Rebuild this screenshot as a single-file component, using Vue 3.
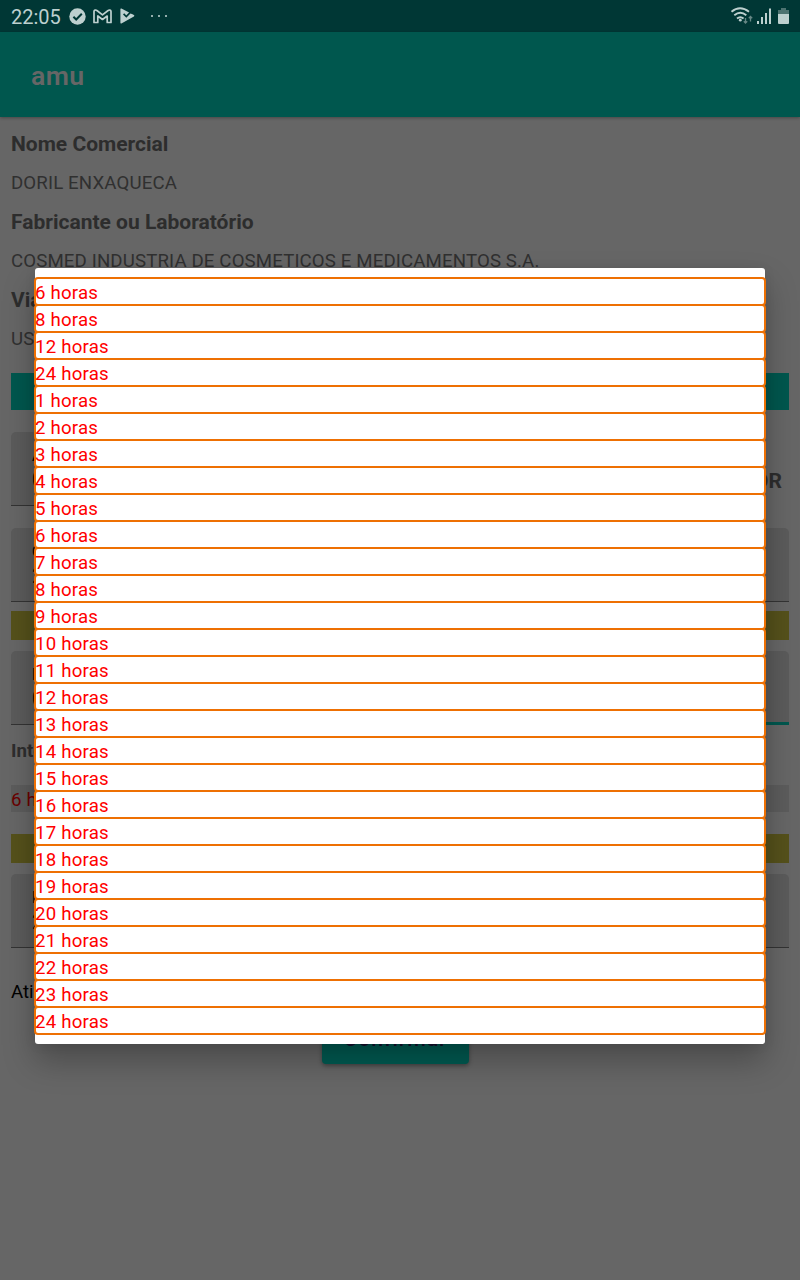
<script setup>
const first = [6, 8, 12, 24]
const hours = [...first, ...Array.from({ length: 24 }, (_, i) => i + 1)]
</script>

<template>
  <div class="screen">
    <header class="status">
      <span class="clock">22:05</span>
      <svg class="ic check" width="17" height="17" viewBox="0 0 17 17">
        <circle cx="8.5" cy="8.5" r="8.2" fill="#bdd0cf" />
        <path d="M4.4 8.7l2.8 2.8 5.6-5.8" fill="none" stroke="#003735" stroke-width="2" />
      </svg>
      <svg class="ic mail" width="19" height="15" viewBox="0 0 19 15">
        <path d="M1 13.5V2.6C1 .9 2.8.6 3.9 1.5L9.5 5.8l5.6-4.3c1.1-.9 2.9-.6 2.9 1.1v10.9h-3.8V7L9.5 10.5 4.8 7v6.5z" fill="none" stroke="#bdd0cf" stroke-width="1.7" stroke-linejoin="round" />
      </svg>
      <svg class="ic play" width="15" height="16" viewBox="0 0 15 16">
        <path d="M.4 1.2Q.4.2 1.4.6L13.9 7q1 .7 0 1.4L1.4 15.4q-1 .4-1-.6z" fill="#bdd0cf" />
        <path d="M3.6 5.9l2.7 2.6 5-5.2" fill="none" stroke="#003735" stroke-width="1.7" />
        <path d="M9.5 4.3l2.2-2.2 2 2-2.6 1.6z" fill="#003735" />
      </svg>
      <span class="dots"><i></i><i></i><i></i></span>
      <span class="spacer"></span>
      <svg class="sys" width="60" height="20" viewBox="0 0 60 20">
        <g fill="none" stroke="#bdd0cf" stroke-width="1.9">
          <path d="M1.5 5.7q8.5-7 17.5 0" />
          <path d="M4.3 9.3q6-5 12 0" />
          <path d="M7 12.5q3.3-2.7 6.6 0" />
        </g>
        <circle cx="10.3" cy="14.2" r="1.4" fill="#bdd0cf" />
        <path d="M15.5 12v5M13.8 15.3l1.7 1.8 1.7-1.8M20.5 15.5v-5M18.8 12.2l1.7-1.8 1.7 1.8" fill="none" stroke="#668785" stroke-width="1.3" />
        <path d="M27 15h2v3h-2zM31 11h2v7h-2zM35 7h2v11h-2zM39 2.5h2V18h-2z" fill="#bdd0cf" />
        <path d="M51 2h5v2h3v4H48V4h3z" fill="#4d7371" />
        <path d="M48 8h11v9q0 1-1 1h-9q-1 0-1-1z" fill="#bdd0cf" />
      </svg>
    </header>
    <div class="appbar">amu</div>

    <main class="content">
      <h2>Nome Comercial</h2>
      <p>DORIL ENXAQUECA</p>
      <h2>Fabricante ou Laboratório</h2>
      <p>COSMED INDUSTRIA DE COSMETICOS E MEDICAMENTOS S.A.</p>
      <h2>Via</h2>
      <p>USO</p>
      <div class="teal-bar"></div>
      <div class="row">
        <div class="field short"><small>A</small><b>0</b></div>
        <strong class="unit">OR</strong>
      </div>
      <div class="field second"><small>Q</small><b>2</b></div>
      <div class="olive"></div>
      <div class="field third"><small>D</small><b>0</b><span class="focus"></span></div>
      <h3>Intervalo</h3>
      <div class="spinner">6 horas</div>
      <div class="olive lower"></div>
      <div class="field fourth"><small>H</small><b>2</b></div>
      <div class="active">Ativo</div>
      <div class="button">Confirmar</div>
    </main>

    <div class="dialog">
      <div v-for="(h, i) in hours" :key="i" class="item">{{ h }} horas</div>
    </div>
  </div>
</template>

<style>
body { background: #666; overflow: hidden; }
</style>

<style scoped>
* { box-sizing: border-box; }
.screen { position: relative; width: 800px; height: 1280px; overflow: hidden; background: #666; font-family: Roboto, sans-serif; font-size: 18.67px; color: #2d2d2d; }
.status { display: flex; align-items: center; height: 32px; background: #003735; padding: 0 10px 0 11px; }
.clock { width: 58px; font-size: 20px; line-height: 32px; color: #bdd0cf; padding-top: 2px; }
.ic { flex: none; }
.mail { margin-left: 7px; }
.play { margin-left: 8px; margin-right: 1px; }
.dots { display: flex; gap: 5px; margin-left: 15px; }
.dots i { width: 2px; height: 2px; background: #94aead; }
.spacer { flex: 1; }
.sys { align-self: flex-start; margin: 6px 0 0; }
.appbar { height: 85px; padding: 2px 31px 0; background: #00574e; color: #666; font-size: 26.67px; font-weight: 600; letter-spacing: .4px; line-height: 85px; box-shadow: 0 1px 3px rgba(0, 0, 0, .3); }
.content { display: flex; flex-direction: column; padding: 7px 11px 0; }
h2, p, h3 { margin: 0; }
h2 { height: 39px; font-size: 21px; line-height: 41px; font-weight: 700; }
p { height: 39px; line-height: 41px; letter-spacing: .13px; color: #303030; }
.teal-bar { height: 37px; margin-top: 15px; background: #00574e; }
.row { display: flex; justify-content: space-between; margin-top: 22px; padding-right: 7px; }
.field { position: relative; display: flex; flex-direction: column; height: 74px; padding: 14px 21px 0; background: #5b5b5b; border-bottom: 1px solid #333; border-radius: 5px 5px 0 0; color: #000; }
.field small { font-size: 16px; line-height: 20px; }
.field b { font-size: 21.33px; font-weight: 400; line-height: 28px; }
.short { width: 600px; }
.unit { font-size: 21px; line-height: 99px; height: 74px; }
.second { margin-top: 22px; }
.olive { height: 29px; margin-top: 9px; background: #55511b; }
.third { margin-top: 11px; }
.focus { position: absolute; right: 0; bottom: -1px; width: 390px; height: 3px; background: #00574e; }
h3 { height: 27px; margin-top: 12px; font-size: 18.67px; line-height: 28px; }
.spinner { height: 27px; margin-top: 21px; line-height: 30px; background: #5c5c5c; color: #6b0000; letter-spacing: .2px; }
.lower { margin-top: 22px; }
.fourth { margin-top: 11px; }
.active { height: 28px; line-height: 28px; margin-top: 30px; color: #000; }
.button { align-self: center; width: 147px; height: 48px; margin: 10px 9px 0 0; background: #005b52; border-radius: 4px; color: #15102e; text-align: center; font-size: 21.33px; font-weight: 500; line-height: 46px; letter-spacing: .9px; box-shadow: 0 2px 4px rgba(0, 0, 0, .35); }
.dialog { position: absolute; left: 35px; top: 268px; width: 730px; height: 776px; padding-top: 9px; background: #fff; border-radius: 3px; box-shadow: 0 17px 32px rgba(0, 0, 0, .27), 0 1px 12px rgba(0, 0, 0, .08); }
.item { height: 29px; margin: 0 -1px -2px; border: 2px solid #ee7003; border-radius: 4px; color: #f00; line-height: 28px; text-indent: -1px; letter-spacing: .2px; }
</style>
